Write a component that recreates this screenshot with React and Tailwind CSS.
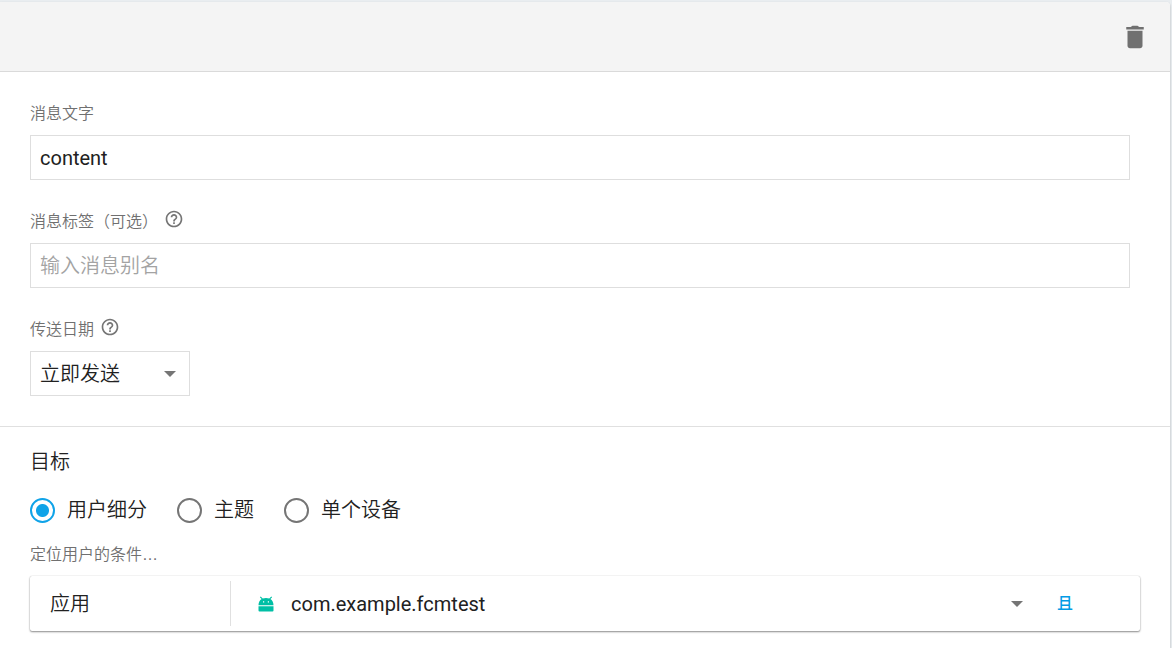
import React, { useState } from "react";

function HelpIcon() {
  return (
    <svg viewBox="0 0 24 24" className="size-5" fill="#757575" aria-hidden="true">
      <path d="M11 18h2v-2h-2v2zm1-16C6.480 2 2 6.480 2 12s4.480 10 10 10 10-4.480 10-10S17.520 2 12 2zm0 18c-4.410 0-8-3.590-8-8s3.590-8 8-8 8 3.590 8 8-3.590 8-8 8zm0-14c-2.210 0-4 1.790-4 4h2c0-1.100.9-2 2-2s2 .9 2 2c0 2-3 1.750-3 5h2c0-2.250 3-2.500 3-5 0-2.210-1.790-4-4-4z" />
    </svg>
  );
}

function TrashIcon() {
  return (
    <svg viewBox="0 0 24 24" className="size-[30px]" fill="#707070" aria-hidden="true">
      <path d="M6 19c0 1.100.9 2 2 2h8c1.100 0 2-.9 2-2V7H6v12zM15.500 4c-.6 0-.7-1-1.700-1h-3.600c-1 0-1.100 1-1.700 1H5v2h14V4z" />
    </svg>
  );
}

function AndroidIcon() {
  return (
    <svg viewBox="0 0 16 16" className="size-4 shrink-0" fill="#00bfa5" aria-hidden="true">
      <path d="M.5 9.200C.5 6.300 1.700 4.200 3.600 3L1.900 1.300l.8-.8 2 2C5.700 2.100 6.800 1.900 8 1.900s2.300.2 3.300.6l2-2 .8.8L12.400 3c1.900 1.200 3.100 3.300 3.100 6.200zM5 5.200v1.300h1.200V5.200zm4.800 0v1.300H11V5.200z" fillRule="evenodd" />
      <path d="M.5 10.300h15v4.200a1 1 0 0 1-1 1h-13a1 1 0 0 1-1-1z" />
    </svg>
  );
}

function Caret({ className }) {
  return (
    <svg viewBox="0 0 12 6" className={`pointer-events-none h-1.5 w-3 ${className}`} fill="#757575" aria-hidden="true">
      <path d="M0 0h12L6 6z" />
    </svg>
  );
}

function Field({ id, label, help, children }) {
  return (
    <div className="flex flex-col gap-[9px]">
      <div className="flex h-6 items-center gap-1.5">
        <label htmlFor={id} className="text-base leading-6 font-[350] text-[#707070]">{label}</label>
        {help && (
          <button type="button" aria-label="帮助" className="-mt-1.5">
            <HelpIcon />
          </button>
        )}
      </div>
      {children}
    </div>
  );
}

const inputClass =
  "h-[45px] w-full border border-[#dedede] bg-white px-[9px] text-xl text-[#212121] outline-none placeholder:font-[350] placeholder:text-[#a3a3a3]";

const targets = [
  { id: "segment", label: "用户细分" },
  { id: "topic", label: "主题" },
  { id: "device", label: "单个设备" },
];

export default function App() {
  const [text, setText] = useState("content");
  const [tag, setTag] = useState("");
  const [target, setTarget] = useState("segment");

  return (
    <div className="flex min-h-screen flex-col bg-[#e9edf0] pt-0.5 pr-0.5 font-['Roboto','Noto_Sans_CJK_SC',sans-serif] font-normal text-[#212121]">
      <main className="flex-1 rounded-tr-sm bg-white shadow-[0_1px_2px_rgba(0,0,0,0.3)]">
        <header className="flex h-[70px] items-center justify-end rounded-tr-sm border-b border-[#dadada] bg-[#f4f4f4] pr-5">
          <button type="button" aria-label="删除">
            <TrashIcon />
          </button>
        </header>

        <section className="flex flex-col gap-[30px] border-b border-[#e0e0e0] pt-[30px] pr-10 pb-[30px] pl-[30px]">
          <Field id="text" label="消息文字">
            <input id="text" className={inputClass} value={text} onChange={(e) => setText(e.target.value)} />
          </Field>
          <Field id="tag" label="消息标签（可选）" help>
            <input id="tag" className={inputClass} placeholder="输入消息别名" value={tag} onChange={(e) => setTag(e.target.value)} />
          </Field>
          <Field id="date" label="传送日期" help>
            <div className="relative w-40">
              <select id="date" className={`${inputClass} appearance-none font-[350]`}>
                <option>立即发送</option>
              </select>
              <Caret className="absolute top-5 right-3.5" />
            </div>
          </Field>
        </section>

        <section className="pt-[21px] pr-[30px] pb-4 pl-[30px]">
          <h2 className="text-xl leading-7 font-[350]">目标</h2>
          <div role="radiogroup" aria-label="目标" className="mt-5 flex gap-[30px]">
            {targets.map((t) => (
              <label key={t.id} className="flex items-center gap-3 text-xl leading-7 font-[350]">
                <input
                  type="radio"
                  name="target"
                  checked={target === t.id}
                  onChange={() => setTarget(t.id)}
                  className="size-[25px] appearance-none rounded-full border-2 border-[#757575] checked:border-[#0fa3e8] checked:bg-[radial-gradient(circle,#0fa3e8_6px,transparent_7px)]"
                />
                {t.label}
              </label>
            ))}
          </div>
          <p className="mt-[19px] font-['Liberation_Sans','Noto_Sans_CJK_SC',sans-serif] text-base leading-6 font-[350] text-[#707070]">定位用户的条件…</p>
          <div className="mt-[9px] flex h-[55px] items-center rounded-xs bg-white shadow-[0_1px_2px_rgba(0,0,0,0.45),0_0_1px_rgba(0,0,0,0.25)]">
            <label htmlFor="app" className="flex h-[45px] w-[201px] shrink-0 items-center border-r border-[#e0e0e0] pl-5 text-xl font-[350]">
              应用
            </label>
            <div className="relative ml-[27px] flex min-w-0 flex-1 items-center">
              <AndroidIcon />
              <select id="app" className="-ml-4 h-[45px] w-full appearance-none bg-transparent pr-8 pl-[33px] text-xl outline-none">
                <option>com.example.fcmtest</option>
              </select>
              <Caret className="absolute right-0" />
            </div>
            <button type="button" className="mr-[67px] ml-[34px] text-base font-medium text-[#039be5]">且</button>
          </div>
        </section>
      </main>
    </div>
  );
}
